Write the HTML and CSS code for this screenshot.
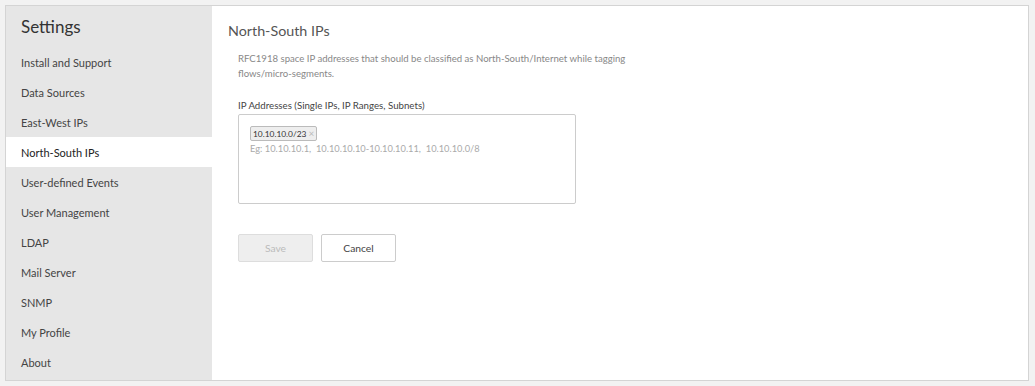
FILE: index.html
```html
<!DOCTYPE html>
<html lang="en">
<head>
    <meta charset="UTF-8">
    <title>Settings - North-South IPs</title>
    <link rel="stylesheet" href="styles.css">
</head>
<body>
    <div class="panel">
        <div class="sidebar">
            <h2 class="sidebar-title">Settings</h2>
            <ul class="menu">
                <li class="menu-item">Install and Support</li>
                <li class="menu-item">Data Sources</li>
                <li class="menu-item">East-West IPs</li>
                <li class="menu-item active">North-South IPs</li>
                <li class="menu-item">User-defined Events</li>
                <li class="menu-item">User Management</li>
                <li class="menu-item">LDAP</li>
                <li class="menu-item">Mail Server</li>
                <li class="menu-item">SNMP</li>
                <li class="menu-item">My Profile</li>
                <li class="menu-item">About</li>
            </ul>
        </div>
        <div class="content">
            <h1 class="page-title">North-South IPs</h1>
            <div class="form">
                <p class="description">RFC1918 space IP addresses that should be classified as North-South/Internet while tagging flows/micro-segments.</p>
                <label class="field-label">IP Addresses (Single IPs, IP Ranges, Subnets)</label>
                <div class="tag-box">
                    <span class="tag">10.10.10.0/23 <span class="tag-remove">&times;</span></span>
                    <div class="placeholder">Eg: 10.10.10.1,&nbsp; 10.10.10.10-10.10.10.11,&nbsp; 10.10.10.0/8</div>
                </div>
                <div class="button-row">
                    <button class="button disabled">Save</button>
                    <button class="button">Cancel</button>
                </div>
            </div>
        </div>
    </div>
</body>
</html>
```

FILE: styles.css
```css
* {
    box-sizing: border-box;
}
body {
    margin: 0;
    padding: 5px;
    background-color: #f2f2f2;
    font-family: Lato, "Open Sans", sans-serif;
    color: #333;
}
.panel {
    display: flex;
    height: 376px;
    width: 1024px;
    border: 1px solid #d4d4d4;
    background-color: #fff;
}
.sidebar {
    width: 206px;
    background-color: #e6e6e6;
}
.sidebar-title {
    margin: 0;
    padding-left: 15px;
    font-size: 17px;
    font-weight: normal;
    line-height: 41px;
    color: #333;
}
.menu {
    list-style: none;
    margin: 0;
    padding: 0;
}
.menu-item {
    height: 30px;
    line-height: 30px;
    padding-left: 15px;
    padding-top: 1px;
    font-size: 11px;
    color: #444;
}
.menu-item.active {
    background-color: #fff;
    color: #222;
}
.content {
    flex: 1;
    padding: 15px 16px 0;
}
.page-title {
    margin: 0 0 10px;
    font-size: 14.3px;
    font-weight: normal;
    line-height: 20px;
    color: #555;
}
.form {
    padding-left: 10px;
}
.description {
    margin: 0;
    width: 400px;
    font-size: 9.6px;
    line-height: 15px;
    color: #888;
}
.field-label {
    display: block;
    margin-top: 17px;
    font-size: 9.7px;
    line-height: 14px;
    color: #444;
}
.tag-box {
    margin-top: 2px;
    width: 338px;
    height: 90px;
    padding: 6px 11px;
    border: 1px solid #ccc;
    border-radius: 2px;
}
.tag {
    display: inline-block;
    padding: 0 2px;
    height: 15px;
    line-height: 13px;
    font-size: 8.4px;
    color: #333;
    background-color: #eee;
    border: 1px solid #bbb;
    border-radius: 2px;
}
.tag-remove {
    color: #bbb;
    font-size: 10px;
}
.placeholder {
    margin-top: 1px;
    font-size: 9.3px;
    line-height: 14px;
    color: #aaa;
}
.button-row {
    display: flex;
    gap: 8px;
    margin-top: 30px;
}
.button {
    width: 75px;
    height: 28px;
    background-color: #fff;
    border: 1px solid #ccc;
    border-radius: 2px;
    font-family: Lato, "Open Sans", sans-serif;
    font-size: 10.3px;
    color: #444;
}
.button.disabled {
    background-color: #eee;
    border-color: #ddd;
    color: #bbb;
}
```
